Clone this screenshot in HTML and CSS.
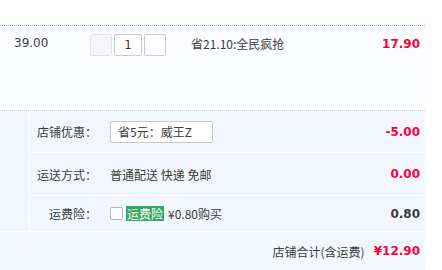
FILE: index.html
```html
<!DOCTYPE html>
<html>
<head>
    <meta charset="UTF-8">
    <title>确认订单</title>
    <link rel="stylesheet" href="styles.css">
</head>
<body>
    <div class="order">
        <div class="order-item">
            <div class="cell-price">39.00</div>
            <div class="cell-qty">
                <span class="qty-btn qty-minus"></span>
                <span class="qty-input">1</span>
                <span class="qty-btn"></span>
            </div>
            <div class="cell-promo">省21.10:全民疯抢</div>
            <div class="cell-sum red">17.90</div>
        </div>

        <div class="extra">
            <div class="extra-side"></div>
            <div class="extra-rows">
                <div class="extra-row row-coupon">
                    <div class="extra-label">店铺优惠：</div>
                    <div class="extra-value">
                        <span class="coupon-box">省5元：威王Z</span>
                    </div>
                    <div class="extra-sum red">-5.00</div>
                </div>
                <div class="extra-row row-ship">
                    <div class="extra-label">运送方式：</div>
                    <div class="extra-value">普通配送 快递 免邮</div>
                    <div class="extra-sum red">0.00</div>
                </div>
                <div class="extra-row row-insure">
                    <div class="extra-label">运费险：</div>
                    <div class="extra-value">
                        <span class="check"></span>
                        <span class="tag-green">运费险</span>
                        <span class="insure-text">¥0.80购买</span>
                    </div>
                    <div class="extra-sum">0.80</div>
                </div>
            </div>
        </div>

        <div class="total">
            <span class="total-label">店铺合计(含运费)</span>
            <span class="total-sum red">¥12.90</span>
        </div>
    </div>
</body>
</html>
```

FILE: styles.css
```css
body {
    margin: 0;
    background: #fff;
    font-family: "DejaVu Sans", "Noto Sans CJK SC", sans-serif;
    font-size: 12px;
    color: #3c3c3c;
}

.order {
    width: 425px;
    padding-top: 25px;
}

.red {
    color: #ff0036;
}

.order-item {
    display: flex;
    align-items: flex-start;
    height: 86px;
    padding-top: 8px;
    box-sizing: border-box;
    background: #fbfcff;
    border-top: 1px dotted #80a2e0;
    border-bottom: 1px dotted #ccc;
}

.cell-price {
    width: 76px;
    padding-left: 14px;
    line-height: 18px;
}

.cell-qty {
    display: flex;
    gap: 2px;
    width: 101px;
}

.qty-btn,
.qty-input {
    display: block;
    height: 20px;
    line-height: 20px;
    border: 1px solid #ccc;
    border-radius: 2px;
    background: #fff;
    text-align: center;
}

.qty-btn {
    width: 20px;
}

.qty-minus {
    background: #f5f6f8;
    border-color: #e4e4e4;
}

.qty-input {
    width: 26px;
}

.cell-promo {
    flex: 1;
    line-height: 20px;
    font-family: "Noto Sans CJK SC", sans-serif;
}

.cell-sum {
    padding-right: 5px;
    font-weight: bold;
    line-height: 20px;
}

.extra {
    display: flex;
    background: #f2f7ff;
    border-bottom: 1px solid #fff;
}

.extra-side {
    width: 29px;
    border-right: 1px solid #fff;
}

.extra-rows {
    flex: 1;
}

.extra-row {
    display: flex;
    align-items: center;
    border-bottom: 1px solid #fff;
    font-family: "Noto Sans CJK SC", sans-serif;
}

.extra-row:last-child {
    border-bottom: none;
}

.row-coupon {
    height: 41px;
}

.row-ship {
    height: 42px;
}

.row-insure {
    height: 35px;
}

.extra-label {
    width: 67px;
    margin-right: 13px;
    text-align: right;
}

.extra-value {
    flex: 1;
    display: flex;
    align-items: center;
}

.coupon-box {
    display: block;
    width: 94px;
    height: 20px;
    line-height: 20px;
    padding-left: 7px;
    background: #fff;
    border: 1px solid #c8c8c8;
    border-radius: 2px;
}

.check {
    display: block;
    width: 11px;
    height: 11px;
    border: 1px solid #b8b8c0;
    border-radius: 2px;
    background: #fff;
    margin-right: 3px;
}

.tag-green {
    display: block;
    padding: 0 1px;
    line-height: 15px;
    background: #36a862;
    color: #fff;
}

.insure-text {
    margin-left: 4px;
}

.extra-sum {
    padding-right: 5px;
    font-family: "DejaVu Sans", sans-serif;
    font-weight: bold;
}

.total {
    display: flex;
    justify-content: flex-end;
    align-items: center;
    height: 38px;
    padding-right: 5px;
    background: #f2f7ff;
    font-family: "Noto Sans CJK SC", sans-serif;
}

.total-sum {
    margin-left: 9px;
    font-family: "DejaVu Sans", sans-serif;
    font-weight: bold;
}
```
